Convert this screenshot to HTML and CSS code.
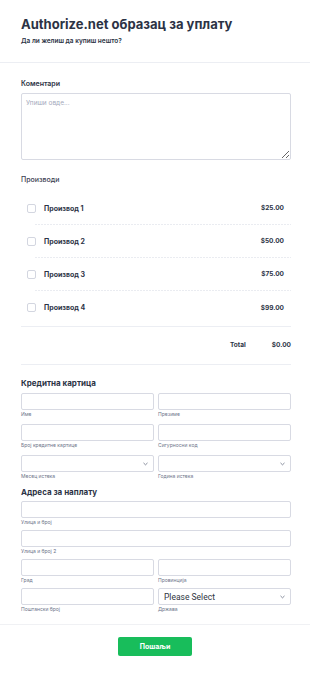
FILE: index.html
```html
<!DOCTYPE html>
<html lang="sr">
<head>
<meta charset="utf-8">
<title>Authorize.net образац за уплату</title>
<link rel="stylesheet" href="styles.css">
</head>
<body>
<div class="page">
  <header class="header">
    <h1 class="title">Authorize.net образац за уплату</h1>
    <p class="subtitle">Да ли желиш да купиш нешто?</p>
  </header>

  <form class="form">
    <label class="label" for="comments">Коментари</label>
    <textarea id="comments" class="textarea" placeholder="Упиши овде..."></textarea>

    <div class="label products-label">Производи</div>
    <div class="products">
      <div class="product"><span class="check"></span><span class="pname">Производ 1</span><span class="price">$25.00</span></div>
      <div class="product"><span class="check"></span><span class="pname">Производ 2</span><span class="price">$50.00</span></div>
      <div class="product"><span class="check"></span><span class="pname">Производ 3</span><span class="price">$75.00</span></div>
      <div class="product"><span class="check"></span><span class="pname">Производ 4</span><span class="price">$99.00</span></div>
    </div>
    <div class="total"><span class="total-label">Total</span><span class="total-value">$0.00</span></div>

    <h2 class="section">Кредитна картица</h2>
    <div class="grid card">
      <div class="field"><input class="input" type="text"><span class="sub">Име</span></div>
      <div class="field"><input class="input" type="text"><span class="sub">Презиме</span></div>
      <div class="field"><input class="input" type="text"><span class="sub">Број кредитне картице</span></div>
      <div class="field"><input class="input" type="text"><span class="sub">Сигурносни код</span></div>
      <div class="field"><div class="input select"><span></span><svg class="chev" viewBox="0 0 6 4" width="5" height="4"><path d="M0.6 0.7 L3 3 L5.4 0.7" fill="none" stroke="#5d6479" stroke-width="0.9"/></svg></div><span class="sub">Месец истека</span></div>
      <div class="field"><div class="input select"><span></span><svg class="chev" viewBox="0 0 6 4" width="5" height="4"><path d="M0.6 0.7 L3 3 L5.4 0.7" fill="none" stroke="#5d6479" stroke-width="0.9"/></svg></div><span class="sub">Година истека</span></div>
    </div>

    <h2 class="section addr-h">Адреса за наплату</h2>
    <div class="grid addr">
      <div class="field full"><input class="input" type="text"><span class="sub">Улица и број</span></div>
      <div class="field full"><input class="input" type="text"><span class="sub">Улица и број 2</span></div>
      <div class="field"><input class="input" type="text"><span class="sub">Град</span></div>
      <div class="field"><input class="input" type="text"><span class="sub">Провинција</span></div>
      <div class="field"><input class="input" type="text"><span class="sub">Поштански број</span></div>
      <div class="field"><div class="input select"><span class="sel-text">Please Select</span><svg class="chev" viewBox="0 0 6 4" width="5" height="4"><path d="M0.6 0.7 L3 3 L5.4 0.7" fill="none" stroke="#5d6479" stroke-width="0.9"/></svg></div><span class="sub">Држава</span></div>
    </div>
  </form>

  <footer class="footer">
    <button class="submit" type="button">Пошаљи</button>
  </footer>
</div>
</body>
</html>
```

FILE: styles.css
```css
* { box-sizing: border-box; }
html, body { margin: 0; padding: 0; background: #fff; }
body { font-family: Inter, "Noto Sans", "Liberation Sans", sans-serif; color: #2c3345; }

.page { width: 310px; }

.header {
  padding: 15px 21px 16px;
  border-bottom: 1px solid #eceef3;
}
.title {
  margin: 0;
  font-size: 13px;
  line-height: 18px;
  font-weight: 700;
  color: #2c3345;
  letter-spacing: 0;
}
.subtitle {
  margin: 3px 0 0;
  font-size: 6.5px;
  line-height: 10px;
  font-weight: 600;
  color: #2c3345;
}

.form {
  display: flex;
  flex-direction: column;
  padding: 0 19px 0 21px;
}
.label {
  display: block;
  font-size: 7px;
  line-height: 10px;
  font-weight: 600;
  color: #2c3345;
  margin-top: 16px;
  margin-bottom: 4px;
}
.textarea {
  display: block;
  width: 100%;
  height: 67px;
  margin: 0;
  padding: 5px 4px;
  border: 1px solid #d8dae3;
  border-radius: 2px;
  font-family: inherit;
  font-size: 6.5px;
  line-height: 9px;
  color: #2c3345;
  resize: vertical;
}
.textarea::placeholder { color: #a3a9bb; }

.products-label { margin-top: 15px; margin-bottom: 7px; font-weight: 500; color: #3a4050; }

.products { display: flex; flex-direction: column; }
.product {
  display: flex;
  align-items: center;
  height: 33px;
  padding: 0 7px 1px 6px;
  background-image: repeating-linear-gradient(to right, #eaecf1 0 2px, transparent 2px 3px);
  background-repeat: no-repeat;
  background-size: calc(100% - 14px) 1px;
  background-position: right bottom;
}
.product:last-child { background-image: none; height: 34px; }
.check {
  width: 9px;
  height: 9px;
  border: 1px solid #d3d6e0;
  border-radius: 2px;
  margin-right: 8px;
  flex: none;
}
.pname {
  flex: 1;
  font-size: 7px;
  font-weight: 700;
  color: #2c3345;
}
.price {
  font-size: 6.5px;
  font-weight: 700;
  color: #2c3345;
}

.total {
  display: flex;
  justify-content: flex-end;
  align-items: center;
  gap: 26px;
  height: 39px;
  border-top: 1px solid #eceef3;
  border-bottom: 1px solid #eceef3;
  margin-top: 1px;
  padding-bottom: 1px;
}
.total-label, .total-value {
  font-size: 6.5px;
  font-weight: 700;
  color: #2c3345;
}

.section {
  margin: 12px 0 4px;
  font-size: 8px;
  line-height: 12px;
  font-weight: 700;
  color: #2c3345;
}
.addr-h { margin: 0 0 3px; }

.grid {
  display: grid;
  grid-template-columns: 1fr 1fr;
  column-gap: 4px;
}
.field { display: flex; flex-direction: column; margin-bottom: 6px; }
.addr .field { margin-bottom: 4px; }
.field.full { grid-column: 1 / -1; }

.input {
  display: block;
  width: 100%;
  height: 17px;
  margin: 0;
  padding: 0 5px;
  border: 1px solid #d8dae3;
  border-radius: 2px;
  background: #fff;
  font-family: inherit;
  font-size: 7px;
}
.select {
  display: flex;
  align-items: center;
  justify-content: space-between;
  padding: 0 5px 0 5px;
}
.sel-text {
  font-family: Roboto, Inter, sans-serif;
  font-size: 8.5px;
  color: #2f3542;
}
.chev { flex: none; }

.sub {
  margin-top: 1px;
  font-size: 5px;
  line-height: 7px;
  color: #6c7489;
}

.footer {
  border-top: 1px solid #f0f1f4;
  margin-top: 7px;
  padding: 12px 0 17px;
  display: flex;
  justify-content: center;
}
.submit {
  width: 74px;
  height: 19px;
  border: 0;
  border-radius: 2px;
  background: #18bd5b;
  color: #fff;
  font-family: inherit;
  font-size: 7px;
  font-weight: 700;
  padding: 0;
}
```
